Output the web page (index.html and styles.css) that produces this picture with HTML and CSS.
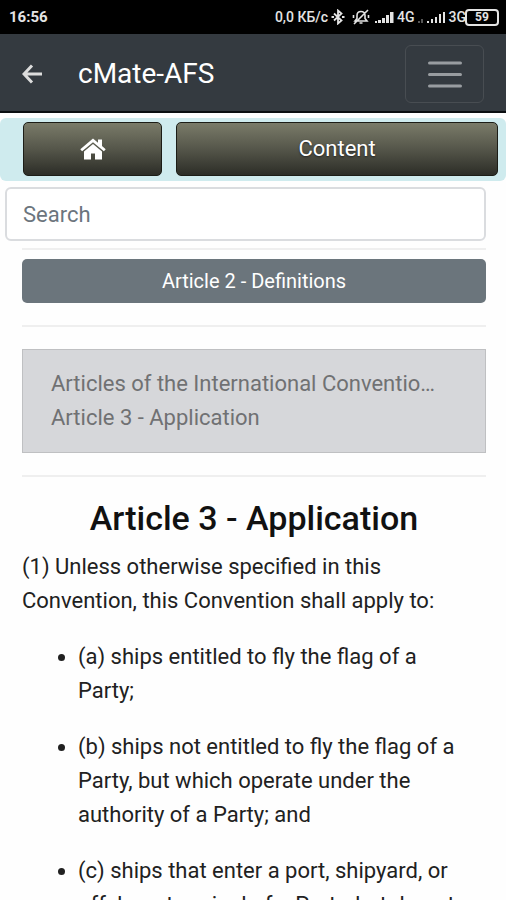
FILE: index.html
```html
<!DOCTYPE html>
<html lang="en">
<head>
<meta charset="utf-8">
<meta name="viewport" content="width=device-width, initial-scale=1">
<title>cMate-AFS</title>
<link rel="stylesheet" href="styles.css">
</head>
<body>
<div class="screen">
  <div class="status">
    <span class="clock">16:56</span>
    <div class="indicators">
      <span>0,0 КБ/с</span>
      <svg class="bluetooth" width="14" height="16" viewBox="0 0 14 16" fill="none" stroke="currentColor" stroke-width="1.8"><path d="M3 4.500l7.500 7L7 14.500v-13l3.500 3-7.500 7"/><path d="M.5 8H3M11 8h2.500"/></svg>
      <svg class="muted" width="18" height="16" viewBox="0 0 18 16" fill="none" stroke="currentColor" stroke-width="1.600"><path d="M3 12h12l-2-2.500V6.500C13 4 11.500 2.500 9 2.500S5 4 5 6.500v3zM7.500 14h3M2 15L16 1M1.500 6v3M16.500 6v3"/></svg>
      <svg class="signal" width="19" height="14" viewBox="0 0 19 14" fill="currentColor"><path d="M0 11h2v2H0zM3 10h3v3H3zM7 8h3v5H7zM11 5h3v8h-3zM15 2h3.500v11H15z"/></svg>
      <span>4G</span>
      <svg class="faint" width="5" height="14" viewBox="0 0 5 14" fill="currentColor"><path d="M0 11h2v2H0zM3 9h2v4H3z"/></svg>
      <svg class="signal second" width="18" height="14" viewBox="0 0 18 14" fill="currentColor"><path d="M0 11h2v2H0zM4 9h2v4H4zM8 7h2v6H8zM12 4h2v9h-2zM16 2h2v11h-2z"/></svg>
      <span class="network">3G</span>
      <span class="battery">59</span>
    </div>
  </div>
  <header class="appbar">
    <a class="back" href="#" aria-label="Back"><svg width="20" height="20" viewBox="0 0 20 20" fill="none" stroke="currentColor" stroke-width="3"><path d="M10 1.500L2 10l8 8.500M2.500 10H20"/></svg></a>
    <span class="brand">cMate-AFS</span>
    <button class="menu" type="button" aria-label="Menu"><svg width="36" height="28" viewBox="0 0 36 28" stroke="currentColor" stroke-width="3" stroke-linecap="round"><path d="M2.500 3h31M2.500 14.500h31M2.500 26h31"/></svg></button>
  </header>
  <nav class="toolbar">
    <button class="tool home" type="button" aria-label="Home"><svg width="26" height="22" viewBox="0 0 26 22" fill="currentColor"><path d="M13 .5L.3 11.300l1.800 2L13 4.200l10.900 9.100 1.800-2-3.700-3.200V1.500h-4v3.200z"/><path d="M13 6l-9 7.500V21.500h7v-6h4v6h7v-8z"/></svg></button>
    <button class="tool content" type="button">Content</button>
  </nav>
  <input class="search" type="search" placeholder="Search" aria-label="Search">
  <main class="article">
    <hr class="rule first">
    <button class="previous" type="button">Article 2 - Definitions</button>
    <hr class="rule">
    <div class="crumb">
      <div>Articles of the International Conventio…</div>
      <div>Article 3 - Application</div>
    </div>
    <hr class="rule">
    <h1 class="title">Article 3 - Application</h1>
    <p class="text">(1) Unless otherwise specified in this Convention, this Convention shall apply to:</p>
    <ul class="list">
      <li>(a) ships entitled to fly the flag of a Party;</li>
      <li>(b) ships not entitled to fly the flag of a Party, but which operate under the authority of a Party; and</li>
      <li>(c) ships that enter a port, shipyard, or offshore terminal of a Party, but do not</li>
    </ul>
  </main>
</div>
</body>
</html>
```
FILE: styles.css
```css
* { box-sizing: border-box; }
body {
  margin: 0;
  background: #fefefe;
  color: #212121;
  font: 22px/34px Roboto, sans-serif;
}
button, input { font: inherit; }
svg { display: block; flex: none; }
.screen {
  display: flex;
  flex-direction: column;
  height: 100vh;
  overflow: hidden;
}
.status {
  display: flex;
  flex: none;
  justify-content: space-between;
  align-items: center;
  height: 34px;
  padding: 0 7px 0 9px;
  background: #000;
  color: #e4e4e4;
  font-size: 14px;
  font-weight: 500;
}
.clock { font-size: 15px; font-weight: 700; }
.indicators { display: flex; align-items: center; gap: 3px; }
.muted { margin: 0 2px 0 4px; }
.second { margin: 0 1px; }
.faint { color: #555; }
.battery {
  width: 34px;
  height: 17px;
  margin-left: -4px;
  border: 2px solid #e4e4e4;
  border-radius: 4px;
  background: #000;
  font-size: 12px;
  font-weight: 700;
  line-height: 13px;
  text-align: center;
}
.appbar {
  display: flex;
  flex: none;
  align-items: center;
  height: 79px;
  padding: 2px 22px 0;
  border-bottom: 2px solid #0b0e11;
  background: #343a40;
}
.back { color: #ddd; }
.brand {
  flex: 1;
  margin-left: 36px;
  color: #fff;
  font-size: 28px;
}
.menu {
  display: flex;
  justify-content: center;
  align-items: center;
  width: 79px;
  height: 58px;
  padding: 0;
  border: 1px solid #484d52;
  border-radius: 6px;
  background: none;
  color: #999da1;
}
.toolbar {
  display: flex;
  flex: none;
  gap: 14px;
  margin-top: 5px;
  padding: 4px 8px 5px 23px;
  border-radius: 6px;
  background: #cfebee;
}
.tool {
  display: flex;
  justify-content: center;
  align-items: center;
  height: 54px;
  padding: 0;
  border: 1px solid #1c1d17;
  border-radius: 5px;
  background: linear-gradient(#7a7b69, #55564a 50%, #2c2d27);
  color: #fff;
  text-shadow: 0 1px 2px #222;
}
.home { flex: 3; }
.content { flex: 7; }
.search {
  flex: none;
  height: 54px;
  margin: 6px 20px 0 5px;
  padding: 0 16px;
  border: 2px solid #dadcdf;
  border-radius: 6px;
  background: #fff;
  appearance: none;
}
.search::placeholder { color: #6c757d; opacity: 1; }
.article { flex: 1; min-height: 0; padding: 0 20px 0 22px; }
.rule {
  margin: 22px 0;
  border: 0;
  border-top: 2px solid #efefef;
}
.first { margin: 7px 0 9px; }
.previous {
  display: block;
  width: 100%;
  height: 44px;
  padding: 0;
  border: 0;
  border-radius: 5px;
  background: #6b757c;
  color: #fff;
  font-size: 20px;
}
.crumb {
  padding: 17px 28px;
  border: 1px solid #bfc0c2;
  background: #d6d7da;
  color: #707173;
}
.title {
  margin: 0 0 13px;
  color: #111;
  font-size: 34px;
  font-weight: 500;
  line-height: 38px;
  text-align: center;
}
.text { margin: 0 0 22px; }
.list { margin: 0; padding: 0 12px 0 56px; }
.list li { margin-bottom: 22px; }
```
